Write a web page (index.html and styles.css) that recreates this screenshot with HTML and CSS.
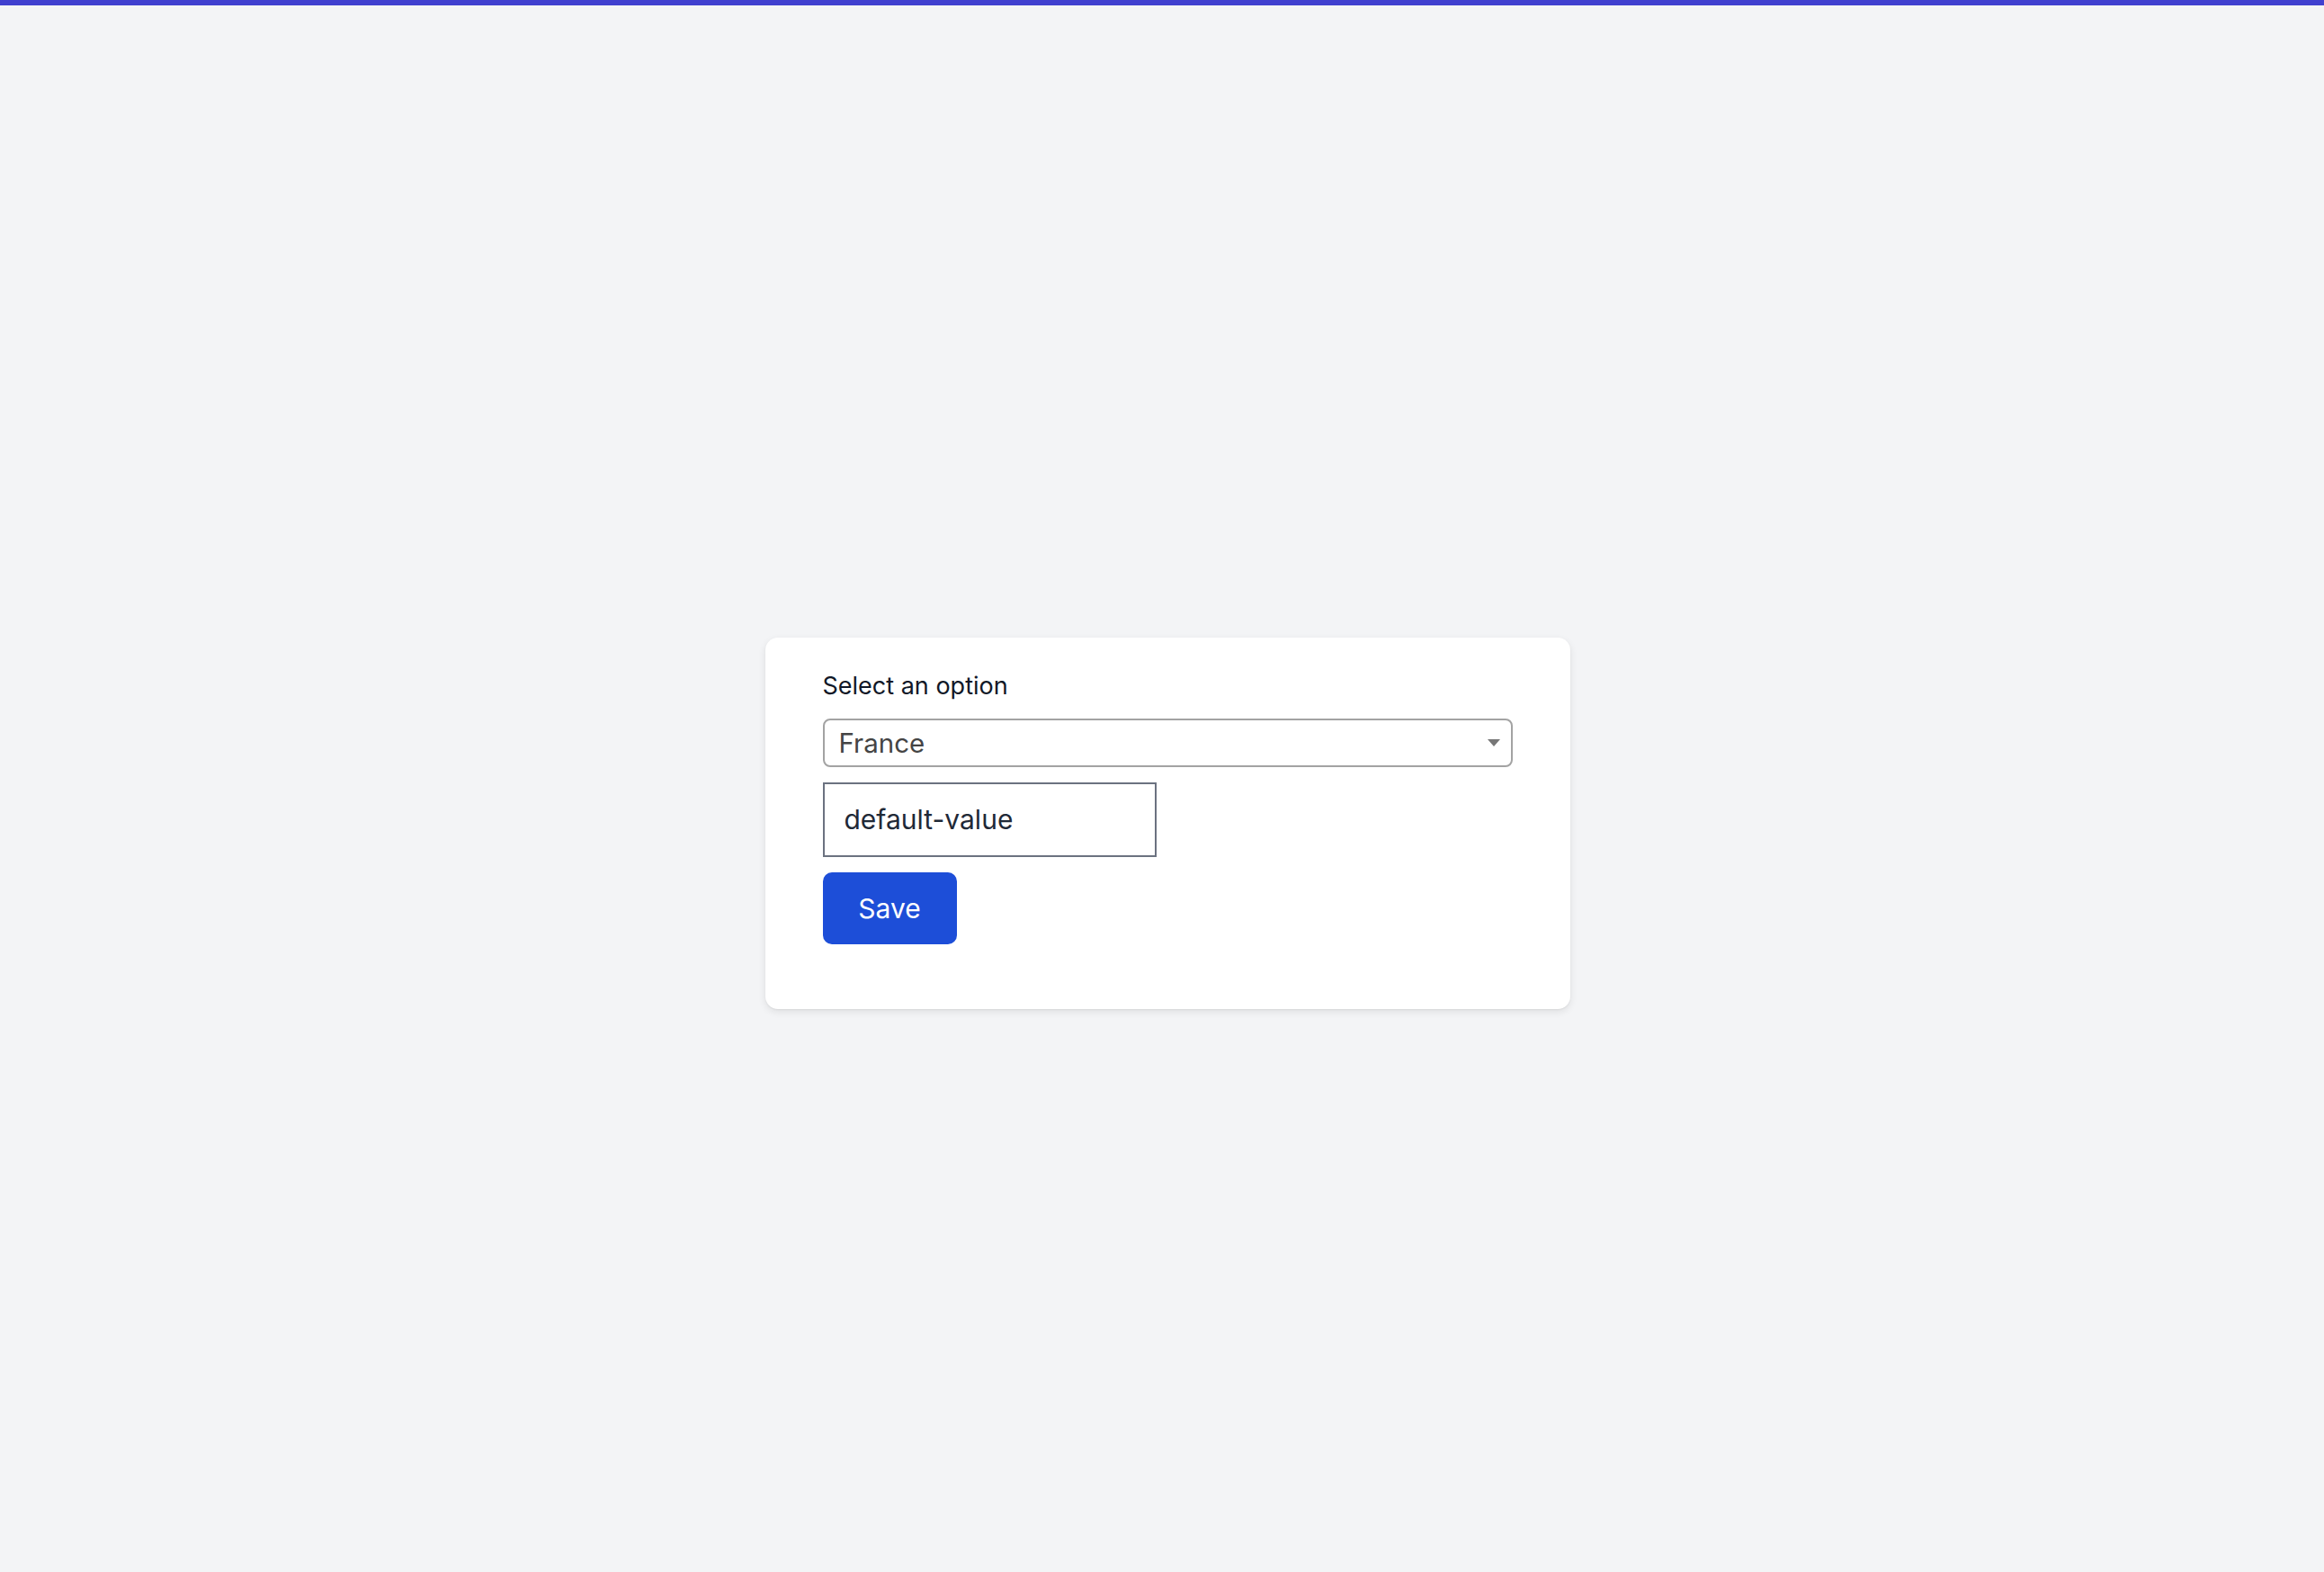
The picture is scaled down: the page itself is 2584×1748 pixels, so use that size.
FILE: index.html
```html
<!DOCTYPE html>
<html lang="en">
<head>
    <meta charset="UTF-8">
    <meta name="viewport" content="width=device-width, initial-scale=1.0">
    <title>Select an option</title>
    <link rel="stylesheet" href="styles.css">
</head>
<body>
    <div class="top-bar"></div>
    <div class="page">
        <form class="card" onsubmit="return false">
            <label class="field-label" for="country">Select an option</label>
            <div class="select-wrap">
                <select id="country" class="select">
                    <option>France</option>
                    <option>Germany</option>
                    <option>Spain</option>
                </select>
            </div>
            <input type="text" class="text-input" value="default-value">
            <button type="submit" class="save-btn">Save</button>
        </form>
    </div>
</body>
</html>
```

FILE: styles.css
```css
html, body {
    margin: 0;
    padding: 0;
}
body {
    background: #f3f4f6;
    font-family: Inter, "Noto Sans", sans-serif;
    min-height: 1748px;
}
.top-bar {
    height: 6px;
    background: #4040cf;
}
.page {
    display: flex;
    justify-content: center;
    padding: 703px 0 0 12px;
}
.card {
    width: 767px;
    background: #ffffff;
    border-radius: 14px;
    padding: 37px 64px 72px;
    box-shadow: 0 3px 8px rgba(0, 0, 0, 0.09), 0 1px 2px rgba(0, 0, 0, 0.05);
    display: flex;
    flex-direction: column;
    align-items: flex-start;
}
.field-label {
    font-size: 27px;
    color: #111827;
    margin-bottom: 19.5px;
}
.select-wrap {
    position: relative;
    width: 100%;
    margin-bottom: 17px;
}
.select-wrap::after {
    content: "";
    position: absolute;
    right: 14px;
    top: 23px;
    border-left: 7px solid transparent;
    border-right: 7px solid transparent;
    border-top: 8px solid #777777;
    pointer-events: none;
}
.select {
    appearance: none;
    -webkit-appearance: none;
    box-sizing: border-box;
    width: 100%;
    height: 54px;
    border: 2px solid #a3a3a3;
    border-radius: 8px;
    background: #ffffff;
    padding: 0 40px 0 16px;
    font-family: inherit;
    font-size: 29.5px;
    color: #444444;
}
.text-input {
    box-sizing: border-box;
    width: 371px;
    height: 83px;
    border: 2px solid #6b7280;
    border-radius: 0;
    padding: 0 22px;
    font-family: inherit;
    font-size: 30px;
    color: #1f2937;
    margin-bottom: 17px;
}
.save-btn {
    width: 149px;
    height: 80px;
    border: none;
    border-radius: 10px;
    background: #1d4ed8;
    color: #ffffff;
    font-family: inherit;
    font-size: 30px;
    cursor: pointer;
}
```
